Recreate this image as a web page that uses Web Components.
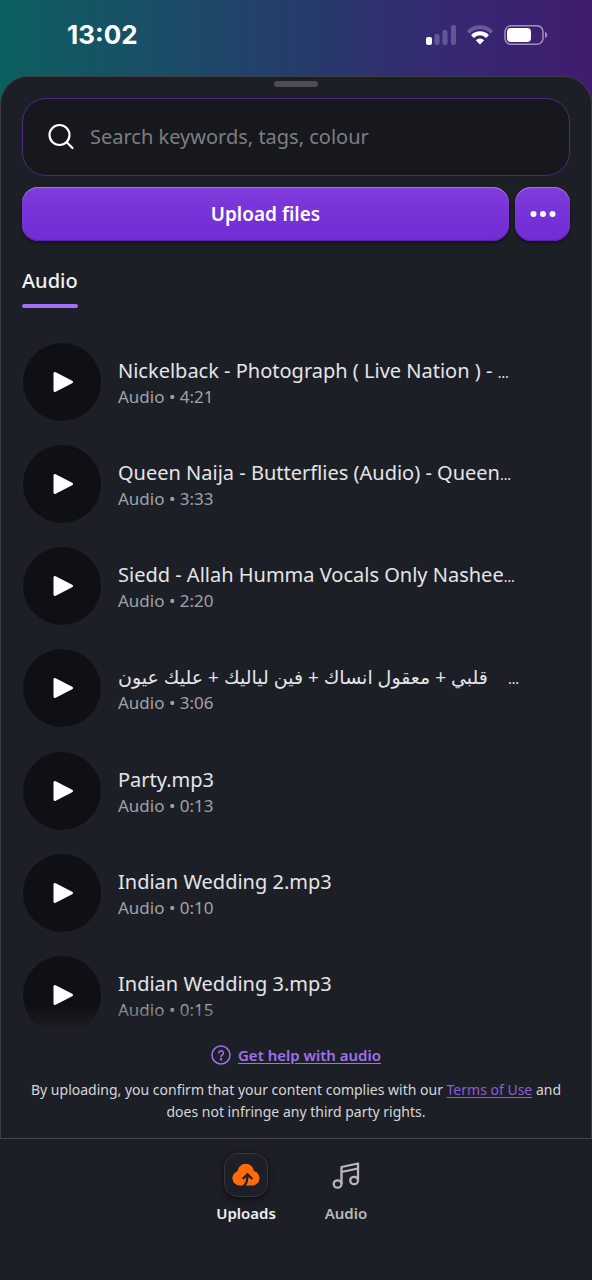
<!DOCTYPE html>
<html lang="en">
<head>
<meta charset="utf-8">
<meta name="viewport" content="width=device-width, initial-scale=1">
<title>Uploads</title>
<style>
  html, body { margin: 0; min-height: 100%; background: #1d1f26; }
  body { font-family: "Noto Sans", "DejaVu Sans", sans-serif; color: #e4e5e8; }
</style>
</head>
<body>
<uploads-app></uploads-app>
<script>
const define = (name, html, setup) => {
  const template = document.createElement('template');
  template.innerHTML = html;
  customElements.define(name, class extends HTMLElement {
    constructor() {
      super();
      this.attachShadow({ mode: 'open' }).append(template.content.cloneNode(true));
    }
    connectedCallback() { if (setup) setup(this.shadowRoot, this); }
  });
};

define('status-bar', `
  <style>
    :host { display: flex; justify-content: space-between; align-items: center; height: 70px; padding: 0 44px 0 67px; color: #fff; }
    time { font: 700 26px/32px Inter, sans-serif; }
    .icons { display: flex; align-items: center; gap: 10px; }
    svg { display: block; }
  </style>
  <time>13:02</time>
  <div class="icons">
    <svg width="32" height="20" viewBox="0 0 32 20" fill="#fff"><rect x="2" y="12" width="6" height="8" rx="2"/><g opacity=".22"><rect x="10.500" y="9" width="5" height="11" rx="2"/><rect x="18.500" y="5" width="5" height="15" rx="2"/><rect x="27" y="0" width="5" height="20" rx="2"/></g></svg>
    <svg width="28" height="20" viewBox="0 0 28 20" fill="none" stroke="#fff"><path d="M2.200 7.300a16.300 16.300 0 0 1 23.600 0" stroke-width="4" opacity=".25"/><path d="M6.500 11.500a10.500 10.500 0 0 1 15 0" stroke-width="4"/><path d="M14 19.500l-4.200-4.300a6 6 0 0 1 8.400 0z" fill="#fff" stroke="none"/></svg>
    <svg width="44" height="20" viewBox="0 0 44 20"><rect x="1" y=".7" width="38" height="18.600" rx="6" fill="none" stroke="#fff" stroke-width="1.500" opacity=".5"/><rect x="3" y="3" width="24" height="14" rx="4" fill="#fff"/><path d="M41 7c3 1 3 5 0 6z" fill="#fff" opacity=".5"/></svg>
  </div>`);

define('search-box', `
  <style>
    :host { display: block; }
    label { display: flex; align-items: center; gap: 15px; height: 78px; padding: 0 24px; box-sizing: border-box; border: 1px solid #4b2a82; border-radius: 24px; background: #17181d; }
    svg { flex: none; }
    input { flex: 1; min-width: 0; padding: 0; border: 0; outline: 0; background: none; color: #fff; font: 400 20px/28px "Noto Sans", sans-serif; }
    input::placeholder { color: #7d7e82; opacity: 1; }
  </style>
  <label>
    <svg width="28" height="28" viewBox="0 0 28 28" fill="none" stroke="#fff" stroke-width="2.200" stroke-linecap="round"><circle cx="12.500" cy="12" r="10"/><path d="M20 19.500l5.500 5.500"/></svg>
    <input type="search" aria-label="Search" placeholder="Search keywords, tags, colour">
  </label>`);

define('action-button', `
  <style>
    :host { display: block; }
    button { display: grid; place-items: center; width: 100%; height: 54px; padding: 0; border: 0; border-radius: 16px; background: linear-gradient(#803cdc, #7630d7 60%, #732dd4); box-shadow: inset 0 1px 1px #a47be0, inset 0 -1px 1px #5a22a8, 0 2px 3px #14101c; color: #fff; font: 600 19px/28px "Noto Sans", sans-serif; }
  </style>
  <button type="button"><slot></slot></button>`,
  (root, host) => { if (host.hasAttribute('label')) root.querySelector('button').setAttribute('aria-label', host.getAttribute('label')); });

define('audio-item', `
  <style>
    :host { display: flex; align-items: center; gap: 17px; padding-left: 1px; }
    button { flex: none; display: grid; place-items: center; width: 78px; height: 78px; padding: 0; border: 0; border-radius: 50%; background: #0f1015; }
    .text { min-width: 0; padding-top: 2px; }
    .title, .meta { white-space: nowrap; }
    .title { font-size: 20px; line-height: 28px; color: #e4e5e8; }
    .meta { font-size: 17px; line-height: 24px; color: #a0a2a8; }
  </style>
  <button type="button" aria-label="Play"><svg width="24" height="24" viewBox="0 0 24 24"><path d="M5 3.500v17l16.500-8.500z" fill="#fff" stroke="#fff" stroke-width="3" stroke-linejoin="round"/></svg></button>
  <div class="text"><div class="title"><slot></slot></div><div class="meta"></div></div>`,
  (root, host) => { root.querySelector('.meta').textContent = 'Audio • ' + host.getAttribute('time'); });

define('audio-list', `
  <style>
    :host { flex: 1; display: flex; flex-direction: column; justify-content: space-between; position: relative; }
    :host::after { content: ""; position: absolute; inset: auto 0 0 0; height: 28px; background: linear-gradient(#1d1f2600, #1d1f26 90%); pointer-events: none; }
    .more { font-size: 14px; line-height: 1px; }
    bdi { margin-right: 20px; font-size: 19px; line-height: 1px; }
  </style>
  <audio-item time="4:21">Nickelback - Photograph ( Live Nation ) - <span class="more">…</span></audio-item>
  <audio-item time="3:33">Queen Naija - Butterflies (Audio) - Queen<span class="more">…</span></audio-item>
  <audio-item time="2:20">Siedd - Allah Humma Vocals Only Nashee<span class="more">…</span></audio-item>
  <audio-item time="3:06"><bdi lang="ar">قلبي + معقول انساك + فين لياليك + عليك عيون</bdi><span class="more">…</span></audio-item>
  <audio-item time="0:13">Party.mp3</audio-item>
  <audio-item time="0:10">Indian Wedding 2.mp3</audio-item>
  <audio-item time="0:15">Indian Wedding 3.mp3</audio-item>`);

define('legal-note', `
  <style>
    :host { display: block; text-align: center; padding: 7px 0 15px; }
    a { color: #a070f0; text-decoration: underline; text-underline-offset: 2px; }
    .help { display: flex; justify-content: center; align-items: center; gap: 7px; font-size: 15px; font-weight: 600; line-height: 28px; }
    p { margin: 10px 0 0; font-size: 14px; line-height: 22px; color: #d5d6da; }
    p a { color: #8b5cd6; }
  </style>
  <div class="help">
    <svg width="20" height="20" viewBox="0 0 20 20" fill="none" stroke="#a070f0" stroke-width="1.500" stroke-linecap="round"><circle cx="10" cy="10" r="9"/><path d="M7.800 8a2.300 2.300 0 1 1 3.400 2c-.9.500-1.200.8-1.200 1.700"/><circle cx="10" cy="14.300" r=".5" fill="#a070f0"/></svg>
    <a href="#help">Get help with audio</a>
  </div>
  <p><span>By uploading, you confirm that your content complies with our</span> <a href="#terms">Terms of Use</a> <span>and</span> <span>does not infringe any third party rights.</span></p>`);

define('nav-item', `
  <style>
    :host { display: block; width: 100px; color: #b7b8bd; }
    :host([active]) { color: #f0f0f3; }
    a { display: flex; flex-direction: column; align-items: center; gap: 4px; color: inherit; text-decoration: none; font-size: 15px; font-weight: 600; line-height: 24px; }
    .tile { display: grid; place-items: center; box-sizing: border-box; width: 44px; height: 44px; border: 1px solid transparent; border-radius: 14px; }
    :host([active]) .tile { border-color: #35373d; box-shadow: 0 2px 6px #0c0d11; background: #1d1f26; }
  </style>
  <a href="#"><span class="tile"><slot name="icon"></slot></span><slot></slot></a>`);

define('uploads-app', `
  <style>
    :host { display: flex; flex-direction: column; min-height: 100vh; background: linear-gradient(90deg, #0c605f, #1c4b69 30%, #263b6b 52%, #372872 76%, #401c6f) top / 100% 120px no-repeat; }
    main { flex: 1; display: flex; flex-direction: column; margin-top: 6px; border: 1px solid #3a3d43; border-bottom: 0; border-radius: 28px 28px 0 0; background: #1d1f26; }
    .handle { width: 44px; height: 6px; margin: 4px auto 11px; border-radius: 3px; background: #4b4d52; }
    .content { flex: 1; display: flex; flex-direction: column; padding: 0 21px; }
    .actions { display: grid; grid-template-columns: 1fr 55px; gap: 6px; margin-top: 11px; }
    .tab { align-self: flex-start; margin: 26px 0 35px; font-size: 20px; font-weight: 500; line-height: 28px; color: #f0f0f3; text-decoration: none; }
    .tab::after { content: ""; display: block; height: 4px; margin-top: 9px; border-radius: 2px; background: #a070f8; }
    nav { display: flex; justify-content: center; height: 142px; padding-top: 14px; box-sizing: border-box; border-top: 1px solid #45474d; background: #1d1f26; }
    svg { display: block; }
  </style>
  <status-bar></status-bar>
  <main>
    <div class="handle"></div>
    <div class="content">
      <search-box></search-box>
      <div class="actions">
        <action-button>Upload files</action-button>
        <action-button label="More options"><svg width="28" height="8" viewBox="0 0 28 8" fill="#fff"><circle cx="4.500" cy="4" r="3"/><circle cx="14" cy="4" r="3"/><circle cx="23.500" cy="4" r="3"/></svg></action-button>
      </div>
      <a class="tab" href="#audio">Audio</a>
      <audio-list></audio-list>
      <legal-note></legal-note>
    </div>
  </main>
  <nav>
    <nav-item active>
      <svg slot="icon" width="28" height="24" viewBox="0 0 28 24"><path d="M7.500 22.500A7.300 7.300 0 0 1 5.400 8.300a8.300 8.300 0 0 1 16.500-.2A7.300 7.300 0 0 1 20.500 22.500z" fill="#ff6a0a"/><path d="M11 23.500c3.400-1.800 4.500-5 4.500-11.500M10.700 16l4.800-4.800 4.800 4.800" fill="none" stroke="#1d1f26" stroke-width="2.200"/></svg>
      Uploads
    </nav-item>
    <nav-item>
      <svg slot="icon" width="28" height="28" viewBox="0 0 28 28" fill="none" stroke="#b7b8bd" stroke-width="2.300" stroke-linejoin="round"><path d="M9.500 23V6L26 2.500V19M9.500 11L26 7.500"/><ellipse cx="5.600" cy="23" rx="3.900" ry="3.700"/><ellipse cx="22.100" cy="19.500" rx="3.900" ry="3.700"/></svg>
      Audio
    </nav-item>
  </nav>`);
</script>
</body>
</html>
